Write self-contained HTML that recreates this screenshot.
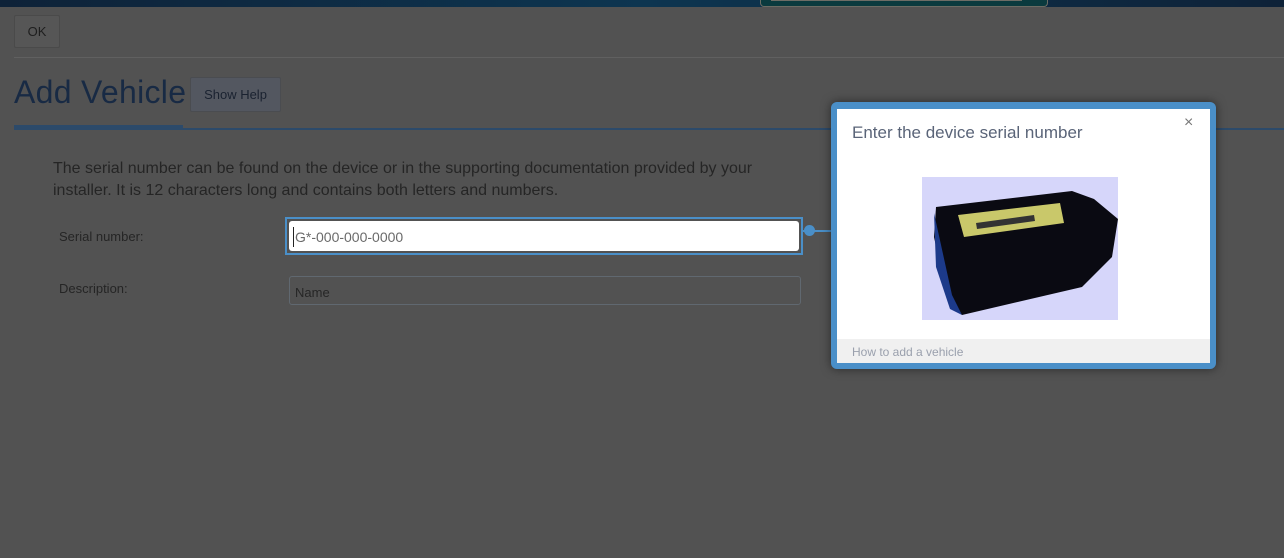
<!DOCTYPE html>
<html><head><meta charset="utf-8"><style>
*{box-sizing:border-box;margin:0;padding:0}
body{width:1284px;height:558px;background:#525252;font-family:"Liberation Sans",sans-serif;position:relative;overflow:hidden;color:#2a2a2a}
.top{position:absolute;left:0;top:0;width:1284px;height:7px;background:linear-gradient(90deg,#0e2238,#0d3550 50%,#0e2238)}
.tab{position:absolute;left:760px;top:0;width:288px;height:7px;background:#0a3a3e;border:1px solid #6b6b63;border-top:none;border-radius:0 0 4px 4px}
.tab i{position:absolute;left:10px;right:25px;top:0;height:1px;background:#6d6d66}
.ok{position:absolute;left:14px;top:15px;width:46px;height:33px;background:#565656;border:1px solid #4a4a4a;border-radius:2px;font-size:13px;line-height:31px;text-align:center;color:#1e1e1e}
.hr{position:absolute;left:14px;right:0;top:57px;height:1px;background:#606060}
h1{position:absolute;left:14px;top:74px;font-weight:normal;font-size:32px;color:#182a44;letter-spacing:0.3px}
.sh{position:absolute;left:190px;top:77px;width:91px;height:35px;background:#535760;border:1px solid #4a4c50;border-radius:2px;font-size:13px;line-height:33px;text-align:center;color:#1a2230}
.ul1{position:absolute;left:14px;top:125px;width:169px;height:3px;background:#2c4a6a}
.ul2{position:absolute;left:14px;top:128px;right:0;height:2px;background:#2c4a6a}
.help{position:absolute;left:53px;top:158px;font-size:16px;line-height:22px;color:#252525;width:760px}
.lab{position:absolute;left:59px;font-size:13px;color:#252525}
.ser{position:absolute;left:285px;top:217px;width:518px;height:38px;border:2px solid #4a8fc8}
.ser div{position:absolute;left:2px;top:2px;right:2px;bottom:2px;background:#fff;border-radius:3px;font-size:14px;color:#6a6a6a;padding:8px 0 0 6px}
.ser div:before{content:"";position:absolute;left:4px;top:6px;width:1px;height:20px;background:#222}
.desc{position:absolute;left:289px;top:276px;width:512px;height:29px;border:1px solid #606870;border-radius:3px;font-size:13px;color:#262626;padding:8px 0 0 5px}
.conn{position:absolute;left:803px;top:230px;width:30px;height:2px;background:#4a8fc8}
.dot{position:absolute;left:804px;top:225px;width:11px;height:11px;border-radius:50%;background:#4a8fc8}
.pop{position:absolute;left:831px;top:102px;width:385px;height:267px;background:#4a8fc8;border-radius:6px;box-shadow:0 0 10px rgba(0,0,0,.5)}
.in{position:absolute;left:6px;top:7px;width:373px;height:254px;background:#fff;overflow:hidden}
.in h2{position:absolute;left:15px;top:14px;font-weight:normal;font-size:17px;color:#5a6478}
.x{position:absolute;left:347px;top:5px;font-size:16px;color:#777}
.img{position:absolute;left:85px;top:68px;width:196px;height:143px;background:#d6d6fa;overflow:hidden}
.foot{position:absolute;left:0;bottom:0;width:373px;height:24px;background:#f0f0f0;font-size:12px;color:#9aa0ad;padding:6px 0 0 15px}
</style></head><body>
<div class="top"></div><div class="tab"><i></i></div>
<div class="ok">OK</div>
<div class="hr"></div>
<h1>Add Vehicle</h1>
<div class="sh">Show Help</div>
<div class="ul1"></div><div class="ul2"></div>
<div class="help">The serial number can be found on the device or in the supporting documentation provided by your installer. It is 12 characters long and contains both letters and numbers.</div>
<div class="lab" style="top:229px">Serial number:</div>
<div class="lab" style="top:281px">Description:</div>
<div class="ser"><div>G*-000-000-0000</div></div>
<div class="desc">Name</div>
<div class="conn"></div><div class="dot"></div>
<div class="pop"><div class="in">
<h2>Enter the device serial number</h2><div class="x">×</div>
<div class="img"><svg width="196" height="143" viewBox="0 0 196 143">
<path d="M14 30 L150 14 L172 22 L196 42 L190 80 L160 110 L40 138 L25 120 L12 60 Z" fill="#0a0a12"/>
<path d="M12 36 L30 118 L40 138 L28 132 L14 90 Z" fill="#1c3a8a"/>
<path d="M36 38 L138 26 L142 46 L42 60 Z" fill="#c9c86a"/>
<path d="M54 46 L112 38 L113 44 L55 52 Z" fill="#333"/>
</svg></div>
<div class="foot">How to add a vehicle</div>
</div></div>
</body></html>
